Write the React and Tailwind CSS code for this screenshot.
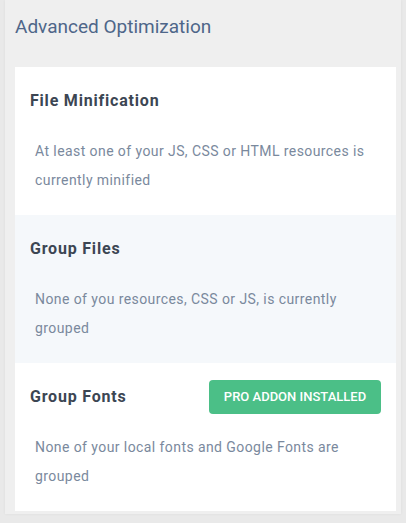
export default function App() {
  const sections = [
    {
      title: 'File Minification',
      text: 'At least one of your JS, CSS or HTML resources is currently minified',
      bg: 'bg-white',
    },
    {
      title: 'Group Files',
      text: 'None of you resources, CSS or JS, is currently grouped',
      bg: 'bg-[#f5f8fb]',
    },
    {
      title: 'Group Fonts',
      text: 'None of your local fonts and Google Fonts are grouped',
      bg: 'bg-white',
      badge: 'Pro Addon Installed',
    },
  ];

  return (
    <div className="min-h-[523px] bg-[#e9e9e9] font-['Roboto',sans-serif]">
      <div className="mx-[5px] bg-[#efefef] pl-[10px] pr-[5px] pb-[3px] shadow-[0_0_3px_rgba(0,0,0,0.06)]">
        <h2 className="pt-[14px] h-[67px] text-[19px] leading-[26px] text-[#4e6689]">Advanced Optimization</h2>
        <div className="bg-white">
          {sections.map((s) => (
            <div key={s.title} className={`${s.bg} h-[148px] pl-[15px] pr-[15px] pt-[15px]`}>
              <div className="flex items-center justify-between h-[34px] mt-[2px]">
                <h3 className="text-[16px] font-bold tracking-[0.05em] text-[#3c4653]">{s.title}</h3>
                {s.badge && (
                  <span className="h-[34px] w-[172px] flex items-center justify-center rounded-[4px] bg-[#4bbf87] text-white text-[13px] font-medium uppercase">
                    {s.badge}
                  </span>
                )}
              </div>
              <p className="mt-[19px] pl-[5px] pr-[10px] text-[14px] leading-[29px] tracking-[0.03em] text-[#7a899d]">{s.text}</p>
            </div>
          ))}
        </div>
      </div>
    </div>
  );
}
